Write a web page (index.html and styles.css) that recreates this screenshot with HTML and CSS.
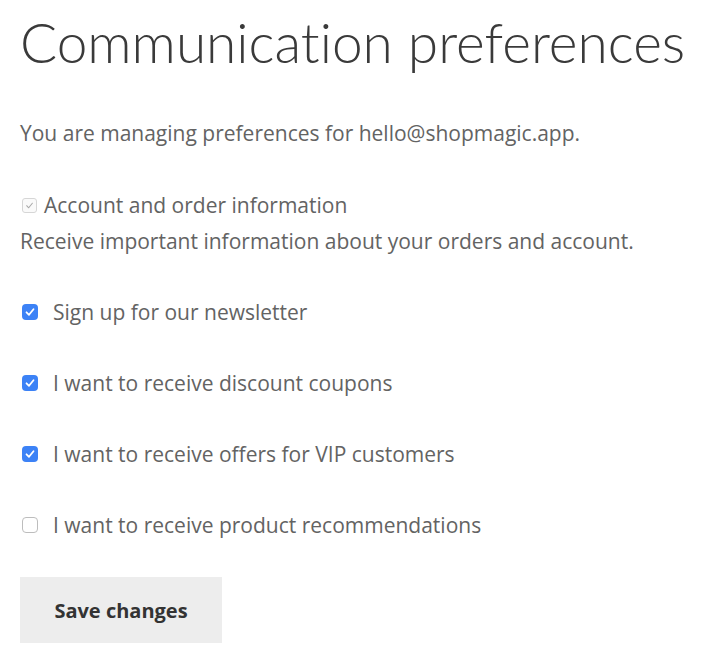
FILE: index.html
```html
<!DOCTYPE html>
<html lang="en">
<head>
<meta charset="utf-8">
<title>Communication preferences</title>
<link rel="stylesheet" href="styles.css">
</head>
<body>
<main class="page">
  <h1 class="title">Communication preferences</h1>
  <p class="intro">You are managing preferences for hello@shopmagic.app.</p>
  <form class="prefs">
    <div class="required">
      <label class="required-label"><span class="box box-disabled"><svg viewBox="0 0 16 16" width="16" height="16"><path d="M4.5 8.3 L7 10.8 L11.5 5.2" fill="none" stroke="#a8a8a8" stroke-width="1.3" stroke-linecap="round" stroke-linejoin="round"/></svg></span>Account and order information</label>
      <p class="required-desc">Receive important information about your orders and account.</p>
    </div>
    <label class="option"><span class="box box-on"><svg viewBox="0 0 16 16" width="16" height="16"><path d="M4.5 8.3 L7 10.8 L11.5 5.2" fill="none" stroke="#fff" stroke-width="1.8" stroke-linecap="round" stroke-linejoin="round"/></svg></span>Sign up for our newsletter</label>
    <label class="option"><span class="box box-on"><svg viewBox="0 0 16 16" width="16" height="16"><path d="M4.5 8.3 L7 10.8 L11.5 5.2" fill="none" stroke="#fff" stroke-width="1.8" stroke-linecap="round" stroke-linejoin="round"/></svg></span>I want to receive discount coupons</label>
    <label class="option"><span class="box box-on"><svg viewBox="0 0 16 16" width="16" height="16"><path d="M4.5 8.3 L7 10.8 L11.5 5.2" fill="none" stroke="#fff" stroke-width="1.8" stroke-linecap="round" stroke-linejoin="round"/></svg></span>I want to receive offers for VIP customers</label>
    <label class="option"><span class="box box-off"></span>I want to receive product recommendations</label>
    <button type="button" class="save">Save changes</button>
  </form>
</main>
</body>
</html>
```
FILE: styles.css
```css
html, body {
  margin: 0;
  padding: 0;
  background: #fff;
}
.page {
  padding: 0 20px;
  font-family: "Open Sans", "Liberation Sans", sans-serif;
  color: #636363;
}
.title {
  margin: 0;
  padding-top: 10px;
  font-family: "Lato", "Open Sans", sans-serif;
  font-size: 55px;
  font-weight: 300;
  line-height: 64px;
  color: #3a3a3a;
  font-variant-ligatures: none;
}
.intro {
  margin: 46px 0 0;
  font-size: 21px;
  line-height: 26px;
}
.prefs {
  display: flex;
  flex-direction: column;
  align-items: flex-start;
}
.required {
  margin-top: 46px;
}
.required-label {
  display: flex;
  align-items: center;
  font-size: 21px;
  line-height: 26px;
}
.required-desc {
  margin: 10px 0 0;
  font-size: 21px;
  line-height: 26px;
}
.option {
  display: flex;
  align-items: center;
  gap: 15px;
  font-size: 21px;
  line-height: 26px;
  margin-top: 45px;
}
.required + .option {
  margin-top: 45px;
}
.box {
  width: 16px;
  height: 16px;
  box-sizing: border-box;
  border-radius: 4px;
  display: inline-flex;
  flex: none;
  margin-left: 2px;
}
.box svg {
  display: block;
}
.box-disabled {
  border: 1px solid #d6d6d6;
  background: #fafafa;
  width: 15px;
  height: 15px;
  margin-right: 7px;
  border-radius: 3px;
}
.box-disabled svg {
  width: 13px;
  height: 13px;
}
.box-on {
  background: #3c82f6;
}
.box-off {
  border: 1px solid #bdbdbd;
  background: #fff;
}
.save {
  margin-top: 39px;
  width: 202px;
  height: 66px;
  border: 0;
  border-radius: 0;
  background: #ededed;
  color: #333;
  font-family: "Open Sans", "Liberation Sans", sans-serif;
  font-weight: 700;
  font-size: 20px;
  padding: 0;
  cursor: pointer;
}
```
